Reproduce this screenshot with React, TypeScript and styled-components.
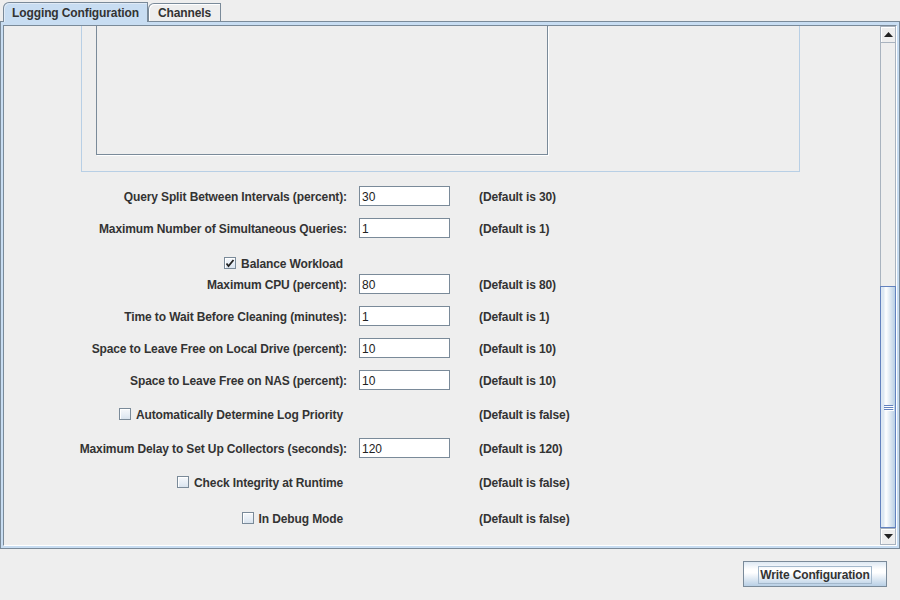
import { FC } from "react";
import styled, { createGlobalStyle } from "styled-components";

const GlobalStyle = createGlobalStyle`
    html, body {
        margin: 0;
        padding: 0;
        background: #eeeeee;
    }
    body {
        font-family: "Liberation Sans", Arial, sans-serif;
        font-size: 12px;
        font-weight: bold;
        letter-spacing: -0.12px;
        color: #333333;
    }
`;

const Frame = styled.div`
    width: 900px;
    height: 600px;
    display: flex;
    flex-direction: column;
    background: #eeeeee;
    overflow: hidden;
`;

const TabStrip = styled.div`
    height: 21px;
    display: flex;
    align-items: flex-end;
    padding-left: 3px;
    flex: 0 0 auto;
`;

const Tab = styled.div<{ $selected?: boolean; $width: number }>`
    position: relative;
    z-index: ${(p) => (p.$selected ? 1 : 0)};
    box-sizing: border-box;
    width: ${(p) => p.$width}px;
    height: ${(p) => (p.$selected ? 20 : 18)}px;
    margin-bottom: ${(p) => (p.$selected ? -1 : 0)}px;
    border: 1px solid #7a8a99;
    border-bottom: none;
    border-top-left-radius: 6px;
    background: ${(p) => (p.$selected ? "#c8ddf2" : "#eeeeee")};
    box-shadow: inset 1px 1px 0 ${(p) => (p.$selected ? "#dfeaf6" : "#ffffff")};
    display: flex;
    align-items: center;
    justify-content: center;
    padding-top: 1px;
    color: #333333;
    white-space: nowrap;
`;

const TabBody = styled.div`
    box-sizing: border-box;
    height: 528px;
    border: 1px solid #7a8a99;
    background: #c8ddf2;
    padding: 3px 2px 2px 2px;
    display: flex;
`;

const ScrollPane = styled.div`
    flex: 1;
    display: flex;
    border: 1px solid #7a8a99;
    border-right-color: #ffffff;
    border-bottom-color: #ffffff;
    background: #eeeeee;
    min-height: 0;
`;

const Viewport = styled.div`
    flex: 1;
    overflow: hidden;
    background: #eeeeee;
`;

const ScrollBar = styled.div`
    width: 16px;
    display: flex;
    flex-direction: column;
    background: #eeeeee;
`;

const ScrollButton = styled.div`
    box-sizing: border-box;
    height: 17px;
    flex: 0 0 auto;
    border: 1px solid #a9b3bf;
    box-shadow: inset 1px 1px 0 #ffffff;
    background: #eeeeee;
    display: flex;
    align-items: center;
    justify-content: center;
`;

const Track = styled.div`
    flex: 1;
    display: flex;
    flex-direction: column;
    border-left: 1px solid #a9b3bf;
    border-right: 1px solid #a9b3bf;
`;

const Thumb = styled.div<{ $size: number }>`
    box-sizing: border-box;
    margin-top: auto;
    margin-left: -1px;
    margin-right: -1px;
    height: ${(p) => p.$size}px;
    border: 1px solid #6382bf;
    background: linear-gradient(
        to right,
        #dde8f3 0%,
        #dde8f3 18%,
        #ffffff 35%,
        #b8cfe5 100%
    );
    display: flex;
    flex-direction: column;
    align-items: center;
    justify-content: center;
    gap: 1px;
`;

const GripLine = styled.span`
    display: block;
    width: 9px;
    height: 1px;
    background: #6382bf;
    box-shadow: 1px 1px 0 #ffffff;
`;

const TitledPanel = styled.div`
    box-sizing: border-box;
    margin-left: 77px;
    width: 719px;
    height: 146px;
    border: 1px solid #b8cfe5;
    border-top: none;
    padding-bottom: 16px;
    display: flex;
`;

const ListBox = styled.div`
    box-sizing: border-box;
    margin-left: 14px;
    width: 452px;
    height: 129px;
    border: 1px solid #7a8a99;
    border-top: none;
    box-shadow: 1px 1px 0 #ffffff;
    background: #eeeeee;
`;

const Row = styled.div<{ $gap: number }>`
    display: flex;
    align-items: center;
    height: 20px;
    margin-top: ${(p) => p.$gap}px;
`;

const Label = styled.div<{ $inset?: number }>`
    box-sizing: border-box;
    width: 343px;
    padding-right: ${(p) => p.$inset ?? 0}px;
    padding-top: 1px;
    display: flex;
    justify-content: flex-end;
    align-items: center;
    white-space: nowrap;
`;

const FieldSlot = styled.div`
    width: 91px;
    margin-left: 12px;
    height: 20px;
`;

const TextField = styled.div`
    box-sizing: border-box;
    width: 91px;
    height: 20px;
    border: 1px solid #7a8a99;
    background: #ffffff;
    padding: 1px 0 0 2px;
    display: flex;
    align-items: center;
    font-weight: normal;
    letter-spacing: 0;
    color: #222222;
`;

const DefaultNote = styled.div`
    margin-left: 29px;
    padding-top: 1px;
    white-space: nowrap;
`;

const CheckBox = styled.span`
    box-sizing: border-box;
    width: 12px;
    height: 12px;
    margin-right: 5px;
    margin-top: -1px;
    border: 1px solid #7a8a99;
    background: linear-gradient(to bottom, #f6f8fb 0%, #e6edf5 60%, #d9e3ee 100%);
    box-shadow: inset 1px 1px 0 #ffffff;
    display: inline-flex;
    align-items: center;
    justify-content: center;
`;

const BottomBar = styled.div`
    flex: 1;
    display: flex;
    justify-content: flex-end;
    align-items: flex-start;
    padding: 12px 13px 0 0;
`;

const Button = styled.button`
    box-sizing: border-box;
    width: 144px;
    height: 26px;
    border: 1px solid #7a8a99;
    background: linear-gradient(
        to bottom,
        #dde8f3 0%,
        #ffffff 30%,
        #ffffff 45%,
        #b8cfe5 100%
    );
    font-family: "Liberation Sans", Arial, sans-serif;
    font-size: 12px;
    font-weight: bold;
    letter-spacing: -0.12px;
    color: #333333;
    padding: 1px 0 0 0;
    display: flex;
    align-items: center;
    justify-content: center;
`;

const FocusRing = styled.span`
    border: 1px solid #a3b8cc;
    padding: 1px 1px 1px 1px;
    white-space: nowrap;
`;

const Arrow: FC<{ down?: boolean }> = ({ down }) => (
    <svg width="9" height="5" viewBox="0 0 9 5">
        <path d={down ? "M0 0 L9 0 L4.5 5 Z" : "M0 5 L9 5 L4.5 0 Z"} fill="#222" />
    </svg>
);

const Check: FC = () => (
    <svg width="10" height="10" viewBox="0 0 10 10">
        <path d="M1.5 5.5 L3.5 8 L8.5 2" fill="none" stroke="#222" strokeWidth="1.8" />
    </svg>
);

type Item =
    | { kind: "field"; label: string; value: string; def: string; gap: number }
    | { kind: "check"; label: string; checked: boolean; def?: string; gap: number };

const items: Item[] = [
    { kind: "field", label: "Query Split Between Intervals (percent):", value: "30", def: "(Default is 30)", gap: 14 },
    { kind: "field", label: "Maximum Number of Simultaneous Queries:", value: "1", def: "(Default is 1)", gap: 12 },
    { kind: "check", label: "Balance Workload", checked: true, gap: 15 },
    { kind: "field", label: "Maximum CPU (percent):", value: "80", def: "(Default is 80)", gap: 1 },
    { kind: "field", label: "Time to Wait Before Cleaning (minutes):", value: "1", def: "(Default is 1)", gap: 12 },
    { kind: "field", label: "Space to Leave Free on Local Drive (percent):", value: "10", def: "(Default is 10)", gap: 12 },
    { kind: "field", label: "Space to Leave Free on NAS (percent):", value: "10", def: "(Default is 10)", gap: 12 },
    { kind: "check", label: "Automatically Determine Log Priority", checked: false, def: "(Default is false)", gap: 14 },
    { kind: "field", label: "Maximum Delay to Set Up Collectors (seconds):", value: "120", def: "(Default is 120)", gap: 14 },
    { kind: "check", label: "Check Integrity at Runtime", checked: false, def: "(Default is false)", gap: 14 },
    { kind: "check", label: "In Debug Mode", checked: false, def: "(Default is false)", gap: 16 },
];

const App: FC = () => {
    return (
        <Frame>
            <GlobalStyle />
            <TabStrip>
                <Tab $selected $width={145}>Logging Configuration</Tab>
                <Tab $width={73}>Channels</Tab>
            </TabStrip>
            <TabBody>
                <ScrollPane>
                    <Viewport>
                        <TitledPanel>
                            <ListBox />
                        </TitledPanel>
                        {items.map((item) =>
                            item.kind === "field" ? (
                                <Row key={item.label} $gap={item.gap}>
                                    <Label>{item.label}</Label>
                                    <FieldSlot>
                                        <TextField>{item.value}</TextField>
                                    </FieldSlot>
                                    <DefaultNote>{item.def}</DefaultNote>
                                </Row>
                            ) : (
                                <Row key={item.label} $gap={item.gap}>
                                    <Label $inset={4}>
                                        <CheckBox>{item.checked && <Check />}</CheckBox>
                                        {item.label}
                                    </Label>
                                    <FieldSlot />
                                    {item.def && <DefaultNote>{item.def}</DefaultNote>}
                                </Row>
                            )
                        )}
                    </Viewport>
                    <ScrollBar>
                        <ScrollButton>
                            <Arrow />
                        </ScrollButton>
                        <Track>
                            <Thumb $size={242}>
                                <GripLine />
                                <GripLine />
                                <GripLine />
                            </Thumb>
                        </Track>
                        <ScrollButton>
                            <Arrow down />
                        </ScrollButton>
                    </ScrollBar>
                </ScrollPane>
            </TabBody>
            <BottomBar>
                <Button>
                    <FocusRing>Write Configuration</FocusRing>
                </Button>
            </BottomBar>
        </Frame>
    );
};

export default App;
